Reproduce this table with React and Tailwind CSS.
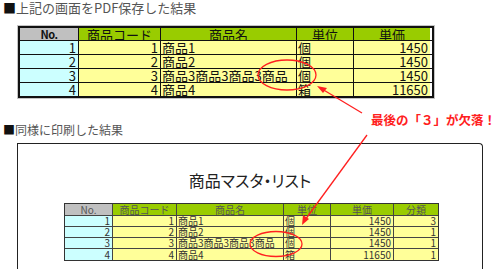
const jp = { fontFamily: '"Noto Sans CJK JP", "Noto Sans", sans-serif' };

const topRows = [
  { no: 1, code: 1, name: '商品1', unit: '個', price: 1450 },
  { no: 2, code: 2, name: '商品2', unit: '個', price: 1450 },
  { no: 3, code: 3, name: '商品3商品3商品3商品', unit: '個', price: 1450 },
  { no: 4, code: 4, name: '商品4', unit: '箱', price: 11650 },
];

const printRows = [
  { no: 1, code: 1, name: '商品1', unit: '個', price: 1450, cat: 3 },
  { no: 2, code: 2, name: '商品2', unit: '個', price: 1450, cat: 1 },
  { no: 3, code: 3, name: '商品3商品3商品3商品', unit: '個', price: 1450, cat: 1 },
  { no: 4, code: 4, name: '商品4', unit: '箱', price: 11650, cat: 1 },
];

// screen capture table: column widths incl. right rule
function ScreenTable() {
  const cell = 'flex h-full items-center border-r border-[#111] whitespace-nowrap';
  return (
    <div className="ml-[17px] mt-[9px] w-[418px] border border-[#c4c4c4]">
      <div className="border-2 border-[#111] text-[13px] leading-none text-[#111]">
        <div className="flex h-[13px] border-b border-[#111]">
          <div className={`${cell} w-[59px] justify-center bg-[#c0c0c0] text-[11px] font-bold tracking-tighter`}>No.</div>
          <div className={`${cell} w-[82px] justify-center bg-[#99cc00]`}>商品コード</div>
          <div className={`${cell} w-[136px] justify-center bg-[#99cc00]`}>商品名</div>
          <div className={`${cell} w-[57px] justify-center bg-[#99cc00]`}>単位</div>
          <div className="flex h-full w-[76px] items-center justify-center bg-[#99cc00]">単価</div>
        </div>
        {topRows.map((r, i) => (
          <div key={r.no} className={`flex ${i < 3 ? 'h-[14px] border-b border-[#111]' : 'h-[13px]'}`}>
            <div className={`${cell} w-[59px] justify-end bg-[#ccffff] pr-[2px]`}>{r.no}</div>
            <div className={`${cell} w-[82px] justify-end bg-[#ffff99] pr-[2px]`}>{r.code}</div>
            <div className={`${cell} w-[136px] bg-[#ffff99] pl-[1px]`}>{r.name}</div>
            <div className={`${cell} w-[57px] bg-[#ffff99] pl-[1px]`}>{r.unit}</div>
            <div className="flex h-full w-[76px] items-center justify-end bg-[#ffff99] pr-[2px]">{r.price}</div>
          </div>
        ))}
      </div>
    </div>
  );
}

function PrintTable() {
  const cell = 'flex h-full items-center border-r border-[#444] whitespace-nowrap';
  const head = `${cell} justify-center bg-[#99cc00] text-[#555]`;
  return (
    <div className="ml-[46px] mt-[13px] w-[375px] border border-[#333] text-[10px] leading-none text-[#333]">
      <div className="flex h-[12px] border-b border-[#444]">
        <div className={`${cell} w-[48px] justify-center bg-[#c0c0c0] text-[#555]`}>No.</div>
        <div className={`${head} w-[64px]`}>商品コード</div>
        <div className={`${head} w-[107px]`}>商品名</div>
        <div className={`${head} w-[47px]`}>単位</div>
        <div className={`${head} w-[63px]`}>単価</div>
        <div className="flex h-full w-[44px] items-center justify-center bg-[#99cc00] text-[#555]">分類</div>
      </div>
      {printRows.map((r, i) => (
        <div key={r.no} className={`flex h-[11px] ${i < 3 ? 'border-b border-[#444]' : ''}`}>
          <div className={`${cell} w-[48px] justify-end bg-[#ccffff] pr-[2px]`}>{r.no}</div>
          <div className={`${cell} w-[64px] justify-end bg-[#ffff99] pr-[2px]`}>{r.code}</div>
          {/* printed output clips the overflowing name */}
          <div className={`${cell} w-[107px] overflow-hidden bg-[#ffff99] pl-[1px]`}>{r.name}</div>
          <div className={`${cell} w-[47px] bg-[#ffff99] pl-[1px]`}>{r.unit}</div>
          <div className={`${cell} w-[63px] justify-end bg-[#ffff99] pr-[2px]`}>{r.price}</div>
          <div className="flex h-full w-[44px] items-center justify-end bg-[#ffff99] pr-[2px]">{r.cat}</div>
        </div>
      ))}
    </div>
  );
}

export default function App() {
  return (
    <div className="relative h-[269px] w-[500px] overflow-hidden bg-white" style={jp}>
      {/* Section 1 */}
      <div className="whitespace-nowrap pl-[3px] text-[13px] leading-[16px] text-[#555]">
        <span className="text-[#111]">■</span>上記の画面をPDF保存した結果
      </div>
      <ScreenTable />

      {/* Section 2 */}
      <div className="mt-[23px] whitespace-nowrap pl-[3px] text-[12px] leading-[15px] text-[#555]">
        <span className="text-[#111]">■</span>同様に印刷した結果
      </div>
      <div className="ml-[17px] mt-[6px] h-[140px] w-[466px] rounded-tr-[4px] border-[1.5px] border-b-0 border-[#222]">
        <div className="mt-[26px] whitespace-nowrap text-center text-[16px] leading-[20px] text-[#222] [font-feature-settings:'palt']">
          商品マスタ・リスト
        </div>
        <PrintTable />
      </div>

      {/* Annotation */}
      <div className="absolute left-[371px] top-[112px] whitespace-nowrap text-[12.5px] font-bold leading-[16px] text-[#ff2020]">
        最後の「３」が欠落！
      </div>
      <svg className="pointer-events-none absolute left-0 top-0" width="500" height="269" viewBox="0 0 500 269">
        <ellipse cx="287" cy="75" rx="29" ry="15" fill="none" stroke="#ff2020" strokeWidth="1.3" />
        <ellipse cx="276" cy="244" rx="26" ry="12.5" fill="none" stroke="#ff2020" strokeWidth="1.3" />
        <line x1="362" y1="113" x2="322" y2="89" stroke="#ff2020" strokeWidth="1.3" />
        <polygon points="317,86 327,88 323,93" fill="#ff2020" />
        <line x1="367" y1="135" x2="305" y2="220" stroke="#ff2020" strokeWidth="1.3" />
        <polygon points="302,225 303,215 309,219" fill="#ff2020" />
      </svg>
    </div>
  );
}
